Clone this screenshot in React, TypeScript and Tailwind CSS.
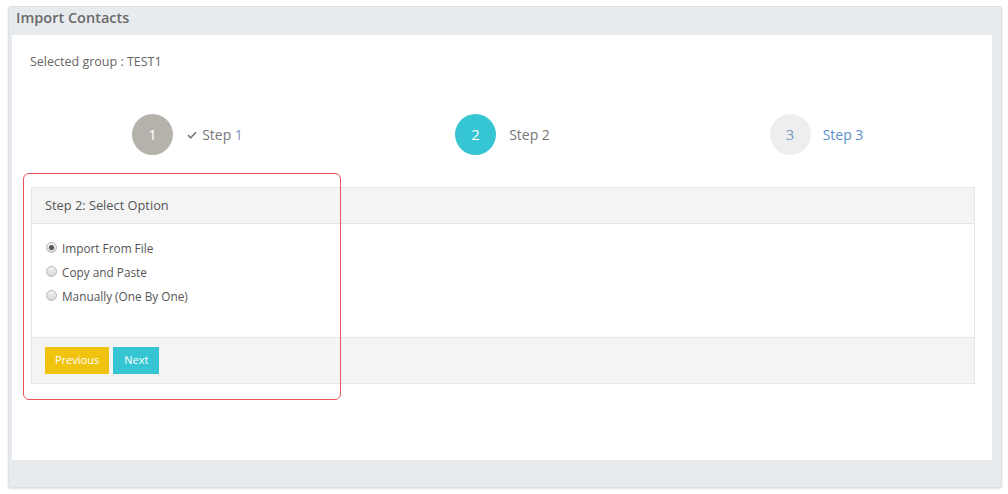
import { useState } from "react";

const FONT = { fontFamily: '"Open Sans", "Noto Sans", Arial, sans-serif' };

function Radio({ checked, label, onClick }: { checked: boolean; label: string; onClick: () => void }) {
  return (
    <label className="flex items-center h-[24px] cursor-pointer" onClick={onClick}>
      <span className="w-[11px] h-[11px] rounded-full border border-[#b5b5b5] bg-gradient-to-b from-[#f4f4f4] to-[#d6d6d6] flex items-center justify-center shrink-0 mr-[5px] -mt-[3px]">
        {checked && <span className="w-[5px] h-[5px] rounded-full bg-[#555]" />}
      </span>
      <span className="text-[11.8px] text-[#555]">{label}</span>
    </label>
  );
}

export default function App() {
  const [opt, setOpt] = useState(0);
  const options = ["Import From File", "Copy and Paste", "Manually (One By One)"];

  return (
    <div className="w-[1008px] h-[494px] bg-white pt-[6px] pl-[8px]" style={FONT}>
      <div className="relative w-[994px] h-[482px] bg-[#e8ebee] rounded-[3px] border border-[#dde1e5] shadow-[0_1px_2px_rgba(0,0,0,0.12)] flex flex-col">
        <div className="h-[28px] pl-[7px] pt-[1px] text-[14.5px] leading-[20px] font-semibold text-[#6a6a6a]">
          Import Contacts
        </div>
        <div className="ml-[3px] mr-[9px] h-[425px] bg-white px-[18px] pt-[18px]">
          <div className="text-[12.5px] text-[#666] h-[18px] leading-[18px]">Selected group : TEST1</div>

          <div className="grid grid-cols-3 mt-[43px] w-[945px]">
            <div className="flex items-center justify-center">
              <div className="w-[41px] h-[41px] rounded-full bg-[#b5b2ab] text-white flex items-center justify-center text-[15px]">1</div>
              <svg className="ml-[14px] mr-[5px]" width="10" height="8" viewBox="0 0 10 8">
                <path d="M1 4.2 L3.7 6.8 L9 1.2" fill="none" stroke="#777" strokeWidth="1.6" />
              </svg>
              <span className="text-[14px] text-[#777]">Step <span className="text-[#7e99b8]">1</span></span>
            </div>
            <div className="flex items-center justify-center">
              <div className="w-[41px] h-[41px] rounded-full bg-[#36c6d3] text-white flex items-center justify-center text-[15px]">2</div>
              <span className="ml-[13px] text-[14px] text-[#777]">Step 2</span>
            </div>
            <div className="flex items-center justify-center -ml-[2px]">
              <div className="w-[41px] h-[41px] rounded-full bg-[#eeeeee] text-[#7c9cc2] flex items-center justify-center text-[15px]">3</div>
              <span className="ml-[12px] text-[14px] text-[#5d8fc8]">Step 3</span>
            </div>
          </div>

          <div className="mt-[32px] ml-[1px] w-[944px] border border-[#e6e6e6]">
            <div className="h-[36px] bg-[#f4f4f4] border-b border-[#e3e3e3] flex items-center pl-[13px] text-[12.8px] text-[#555]">
              Step 2: Select Option
            </div>
            <div className="h-[113px] bg-white pl-[14px] pt-[13px]">
              {options.map((o, i) => (
                <Radio key={o} label={o} checked={opt === i} onClick={() => setOpt(i)} />
              ))}
            </div>
            <div className="h-[46px] bg-[#f4f4f4] border-t border-[#e6e6e6] flex items-center pl-[13px] gap-[4px]">
              <button className="h-[27px] px-[10px] bg-[#f0c30f] text-white text-[11px]">Previous</button>
              <button className="h-[27px] px-[11px] bg-[#36c6d3] text-white text-[11px]">Next</button>
            </div>
          </div>
        </div>
        <div className="absolute left-[14px] top-[166px] w-[318px] h-[227px] border border-[#e8545a] rounded-[6px] pointer-events-none" />
      </div>
    </div>
  );
}
